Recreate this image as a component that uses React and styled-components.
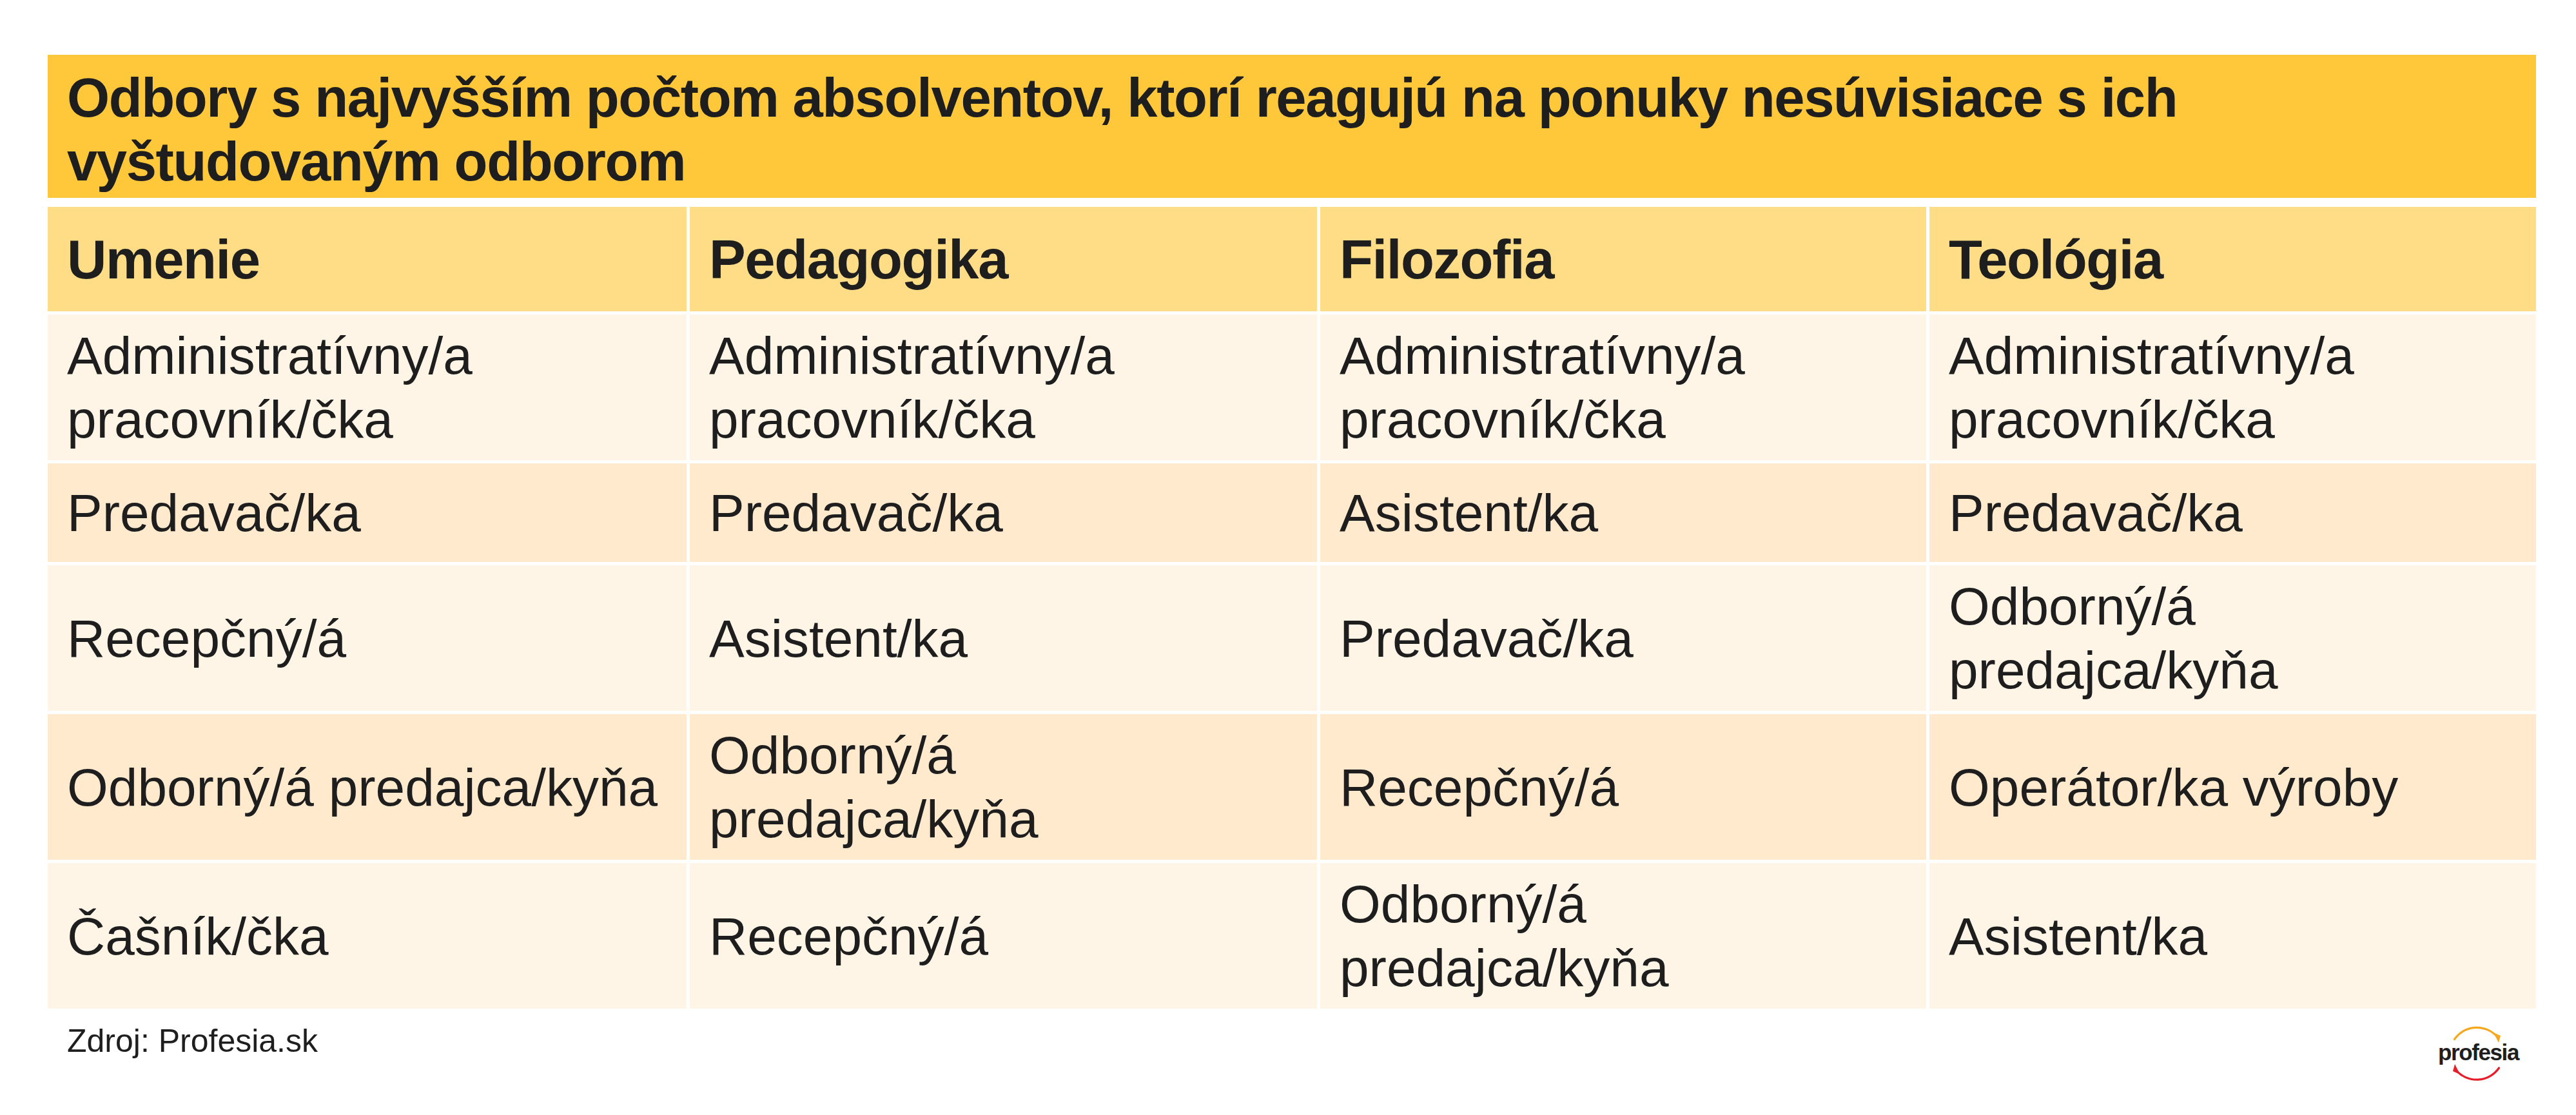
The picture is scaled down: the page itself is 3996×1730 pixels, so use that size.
import styled, { createGlobalStyle } from "styled-components";

const columns = ["Umenie", "Pedagogika", "Filozofia", "Teológia"];

const rows = [
	[
		"Administratívny/a pracovník/čka",
		"Administratívny/a pracovník/čka",
		"Administratívny/a pracovník/čka",
		"Administratívny/a pracovník/čka",
	],
	["Predavač/ka", "Predavač/ka", "Asistent/ka", "Predavač/ka"],
	["Recepčný/á", "Asistent/ka", "Predavač/ka", "Odborný/á predajca/kyňa"],
	["Odborný/á predajca/kyňa", "Odborný/á predajca/kyňa", "Recepčný/á", "Operátor/ka výroby"],
	["Čašník/čka", "Recepčný/á", "Odborný/á predajca/kyňa", "Asistent/ka"],
];

export default function App() {
	return (
		<>
			<GlobalStyle />
			<Page>
				<Title>
					Odbory s najvyšším počtom absolventov, ktorí reagujú na ponuky nesúvisiace s ich vyštudovaným odborom
				</Title>
				<Grid>
					{columns.map((c) => (
						<HeadCell key={c}>{c}</HeadCell>
					))}
					{rows.map((row, i) =>
						row.map((cell, j) => (
							<Cell key={i + "-" + j} $shade={i % 2 === 1}>
								{cell}
							</Cell>
						))
					)}
				</Grid>
				<Footer>
					<Source>Zdroj: Profesia.sk</Source>
					<Logo>
						<svg width="100" height="100" viewBox="0 0 100 100">
							<path
								d="M15.5 27.5 A42 42 0 0 1 82 24"
								fill="none"
								stroke="#f6a81f"
								strokeWidth="3.2"
								strokeLinecap="round"
							/>
							<polygon points="76,17 87,22 84,33" fill="#f6a81f" />
							<path
								d="M84.5 72 A42 42 0 0 1 18 75.5"
								fill="none"
								stroke="#e61e2a"
								strokeWidth="3.2"
								strokeLinecap="round"
							/>
							<polygon points="24,82 13,77 16,66" fill="#e61e2a" />
						</svg>
						<LogoText>profesia</LogoText>
					</Logo>
				</Footer>
			</Page>
		</>
	);
}

const GlobalStyle = createGlobalStyle`
	body {
		margin: 0;
		background: #ffffff;
		font-family: "Liberation Sans", Arial, sans-serif;
		color: #1e1e1e;
	}
`;

const Page = styled.div`
	width: 3860px;
	padding: 85px 0 0 74px;
	display: flex;
	flex-direction: column;
`;

const Title = styled.div`
	background: #ffc83b;
	box-sizing: border-box;
	height: 222px;
	padding: 17px 30px 7px;
	font-size: 85px;
	font-weight: 700;
	letter-spacing: -1.4px;
	line-height: 99px;
`;

const Grid = styled.div`
	margin-top: 14px;
	display: grid;
	grid-template-columns: 991px 973px 940px 941px;
	gap: 5px;
`;

const HeadCell = styled.div`
	background: #ffdd86;
	box-sizing: border-box;
	min-height: 162px;
	padding: 0 30px;
	display: flex;
	align-items: center;
	font-size: 85px;
	font-weight: 700;
	letter-spacing: -1.4px;
	line-height: 99px;
`;

const Cell = styled.div`
	background: ${(p) => (p.$shade ? "#ffeacd" : "#fff5e6")};
	box-sizing: border-box;
	min-height: 153px;
	padding: 14px 30px;
	display: flex;
	align-items: center;
	font-size: 82px;
	line-height: 99px;
`;

const Footer = styled.div`
	display: flex;
	justify-content: space-between;
	align-items: flex-start;
	padding-top: 20px;
	padding-right: 42px;
`;

const Source = styled.div`
	padding-left: 30px;
	font-size: 50px;
	line-height: 60px;
`;

const Logo = styled.div`
	position: relative;
	width: 100px;
	height: 100px;

	svg {
		display: block;
	}
`;

const LogoText = styled.span`
	position: absolute;
	left: -10px;
	right: -10px;
	top: 28px;
	text-align: center;
	font-size: 35px;
	font-weight: 700;
	letter-spacing: -1.4px;
	line-height: 40px;
	color: #1e1e1e;
`;
